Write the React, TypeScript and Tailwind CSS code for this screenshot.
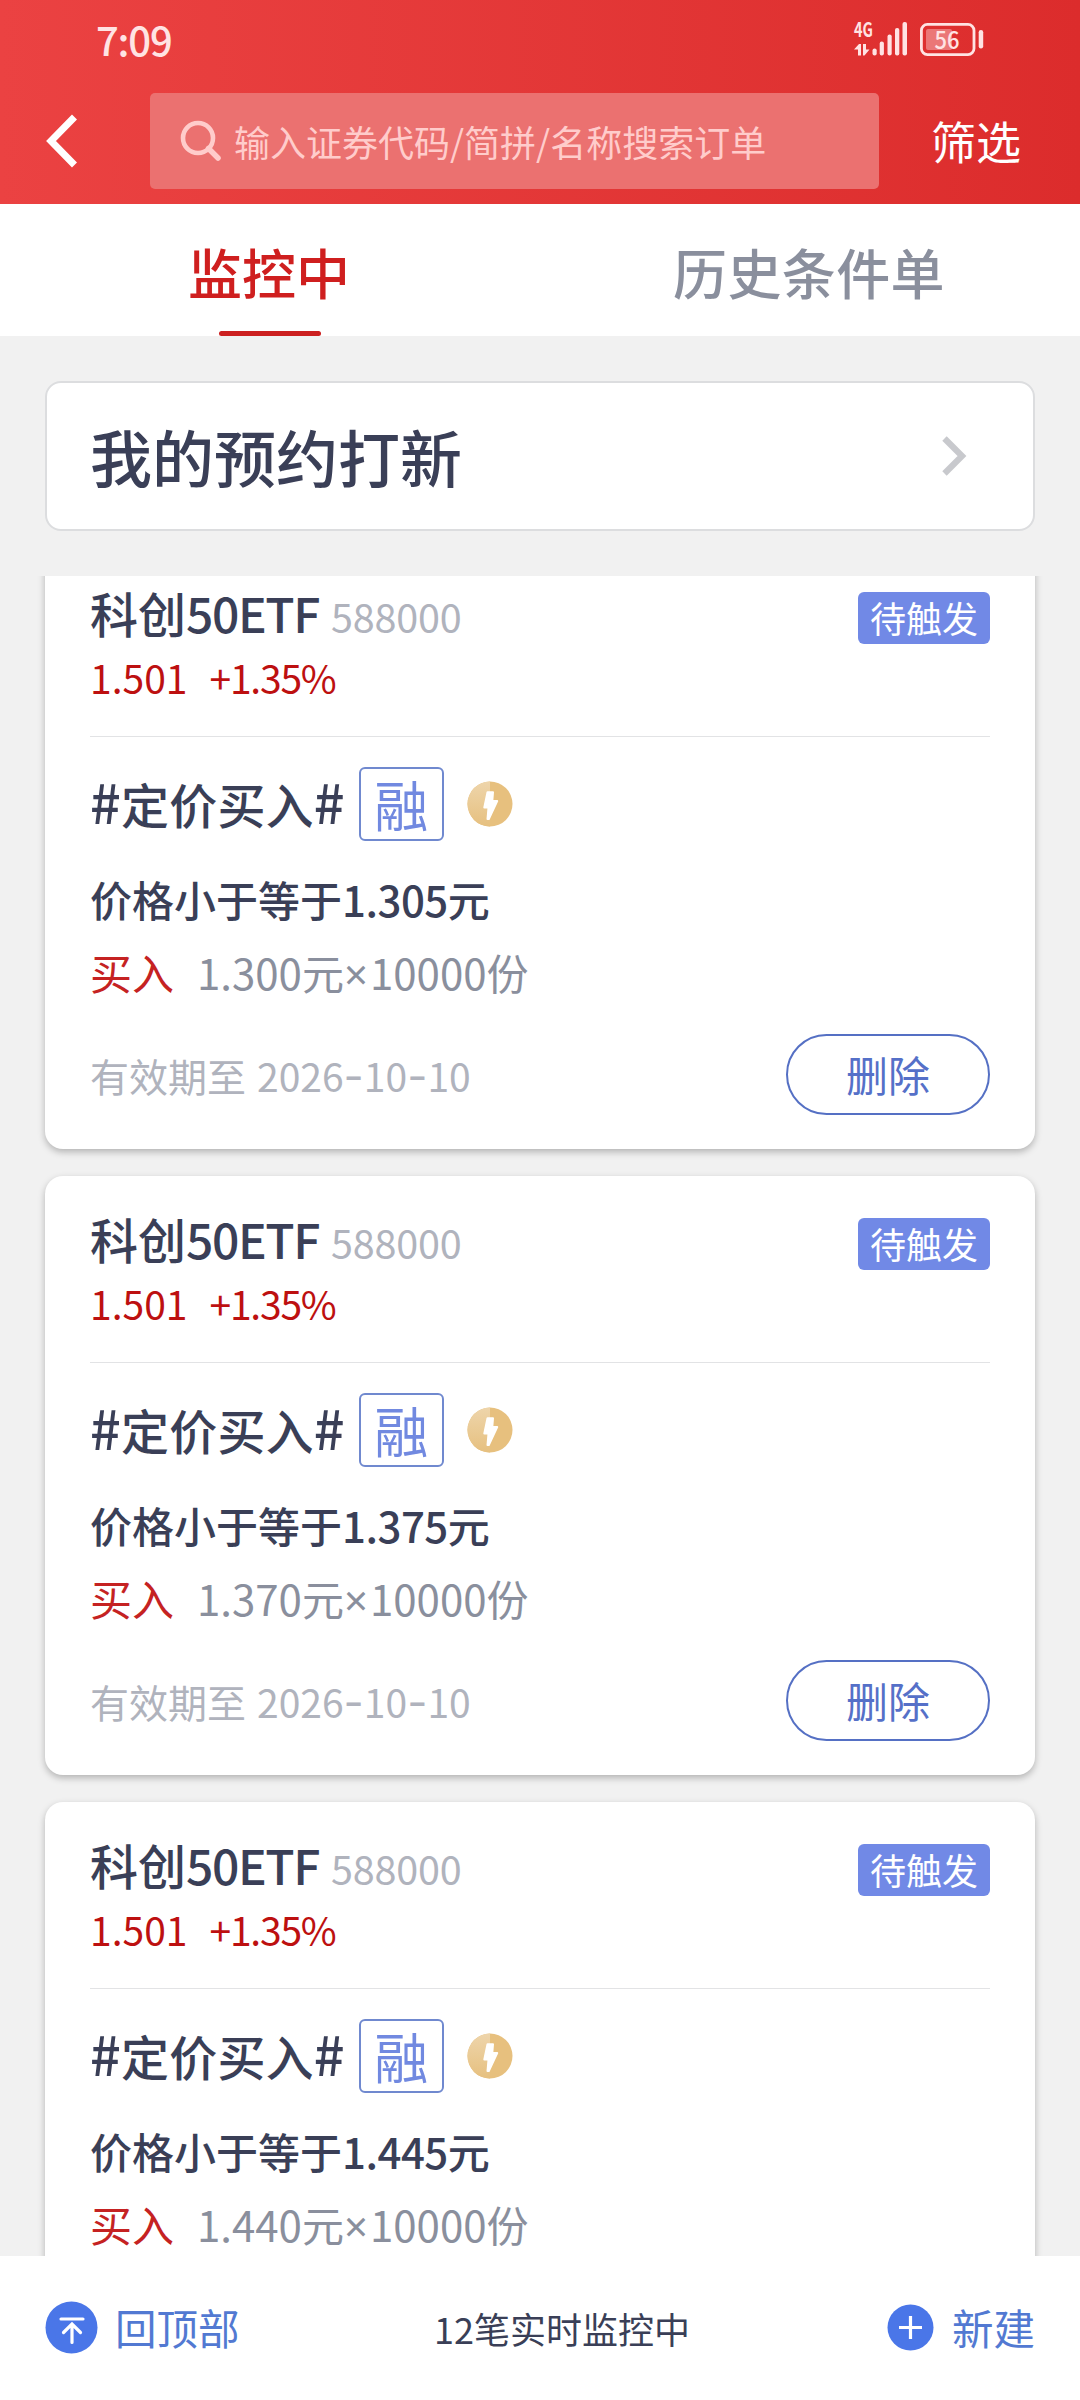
const orders = [
  { trigger: "1.305", price: "1.300", expires: "2026-10-10" },
  { trigger: "1.375", price: "1.370", expires: "2026-10-10" },
  { trigger: "1.445", price: "1.440", expires: "" },
];

function StatusIcons() {
  return (
    <svg className="h-[56px] w-[138px]" viewBox="-4 -10 138 56" fill="#ffe3e3">
      <text x="0" y="16" fontSize="20" fontWeight="700" textLength="19" lengthAdjust="spacingAndGlyphs">
        4G
      </text>
      <path d="M0 28.500 5 23H7V34.500H4V28.500ZM9 23h3v5.500h3.500L10.500 34.500H9Z" />
      <rect x="18.500" y="27.500" width="4.200" height="7" rx="2" />
      <rect x="25.700" y="20.500" width="4.200" height="14" rx="2" />
      <rect x="33.500" y="13.500" width="4.200" height="21" rx="2" />
      <rect x="41" y="7" width="4.300" height="27.500" rx="2" />
      <rect x="48.500" y="1" width="4.500" height="33.500" rx="2" />
      <rect x="67.400" y="3.400" width="52.600" height="30.200" rx="6" fill="none" stroke="#ffe3e3" strokeWidth="2.800" />
      <rect x="72" y="8" width="26" height="21" rx="2" opacity="0.4" />
      <rect x="124.700" y="9" width="4.500" height="18.500" rx="2.200" />
      <text x="80.500" y="27.500" fontSize="24" fontWeight="500" textLength="25" lengthAdjust="spacingAndGlyphs">
        56
      </text>
    </svg>
  );
}

function Header() {
  return (
    <header className="h-[204px] shrink-0 bg-linear-to-r from-[#eb4242] to-[#dc2c2c] text-white">
      <div className="flex h-[93px] items-start justify-between pr-[92px] pl-[96px]">
        <span className="mt-[15px] text-[40px] leading-[48px] font-medium tracking-[-1.2px] text-[#ffe3e3]">7:09</span>
        <div className="mt-[11px]">
          <StatusIcons />
        </div>
      </div>
      <div className="flex h-24 items-center">
        <div className="flex w-[150px] pl-[46px]">
          <svg className="h-[54px] w-8" viewBox="0 0 32 54" fill="none" stroke="#fff" strokeWidth="7">
            <path d="M28.500 3 5 27 28.500 51" />
          </svg>
        </div>
        <div className="flex h-24 w-[729px] items-center rounded-[5px] bg-[#eb7170] pl-[30px] text-[#ffcccb]">
          <svg className="h-[42px] w-[42px]" viewBox="0 0 42 42" fill="none" stroke="currentColor" strokeWidth="4.600">
            <circle cx="18" cy="18" r="15" />
            <path d="m28.500 28.500 9.500 9.500" strokeLinecap="round" strokeWidth="5.500" />
          </svg>
          <span className="ml-[12px] text-[36px] leading-[44px]">输入证券代码/简拼/名称搜索订单</span>
        </div>
        <span className="ml-[52px] text-[45px] leading-[54px]">筛选</span>
      </div>
    </header>
  );
}

function Tabs() {
  return (
    <nav className="grid h-[132px] shrink-0 grid-cols-2 bg-white text-[54px] leading-[66px] font-medium">
      <div className="flex flex-col items-center pt-[35px] text-[#cf1f1f]">
        <span className="pr-[2px]">监控中</span>
        <span className="mt-[26px] h-[5px] w-[102px] rounded-full bg-[#cc2020]" />
      </div>
      <div className="flex justify-center pt-[35px] pr-[2px] tracking-[0.4px] text-[#8a8f9d]">历史条件单</div>
    </nav>
  );
}

function BoltIcon() {
  return (
    <svg className="h-[46px] w-[46px]" viewBox="0 0 46 46">
      <defs>
        <linearGradient id="gold" x1="0" y1="0" x2="0" y2="1">
          <stop offset="0" stopColor="#eed5ab" />
          <stop offset="1" stopColor="#e6c07f" />
        </linearGradient>
      </defs>
      <circle cx="23" cy="23" r="22.500" fill="#e7c07e" />
      <path d="M23 .5a22.500 22.500 0 0 0 0 45Z" fill="url(#gold)" />
      <path
        d="M20.500 11.200H26L25.300 20h4.900L21.800 38h-1.300l1-11.500h-4.200Z"
        fill="#fff"
        stroke="#fff"
        strokeWidth="2"
        strokeLinejoin="round"
      />
    </svg>
  );
}

function OrderCard({ trigger, price, expires }: { trigger: string; price: string; expires: string }) {
  return (
    <article className="h-[599px] shrink-0 rounded-[18px] bg-white px-[45px] pt-[42px] text-[#3a3f57] shadow-[0_3px_7px_rgba(0,0,0,0.26)]">
      <div className="flex h-[52px] items-start justify-between">
        <div className="flex items-baseline leading-[40px]">
          <span className="text-[48px] font-medium">
            科创<span className="tracking-[-1.4px]">50ETF</span>
          </span>
          <span className="ml-[12px] text-[39.500px] tracking-[-0.2px] text-[#b0b3bd]">588000</span>
        </div>
        <span className="flex h-[52px] w-[132px] items-center justify-center rounded-[6px] bg-[#7189e6] pb-[3px] text-[36px] leading-[44px] text-white">
          待触发
        </span>
      </div>
      <div className="mt-[9px] flex gap-[22px] text-[39px] leading-[48px] text-[#bd1010]">
        <span>1.501</span>
        <span className="tracking-[-1.2px]">+1.35%</span>
      </div>
      <div className="mt-[35px] h-px bg-[#e2e3e5]" />
      <div className="mt-[30px] flex h-[74px] items-center">
        <span className="pb-[5px] text-[48px] leading-[56px] font-medium tracking-[0.2px]">
          <span className="text-[54px]">#</span>定价买入<span className="text-[54px]">#</span>
        </span>
        <span className="ml-[14px] flex h-[74px] w-[85px] items-center justify-center rounded-[6px] border-2 border-[#7089cf] text-[54px] leading-[60px] text-[#7189e0]">
          融
        </span>
        <span className="ml-[23px]">
          <BoltIcon />
        </span>
      </div>
      <p className="mt-[37px] text-[42px] leading-[42px] font-medium">
        价格小于等于<span className="tracking-[-0.5px]">{trigger}</span>元
      </p>
      <p className="mt-[31px] flex h-[42px] text-[42px] leading-[42px] text-[#8a8f9d]">
        <span className="text-[#c52222]">买入</span>
        <span className="ml-[23px]">
          {price}元<span className="mr-[2px] font-['Noto_Sans']">×</span>10000份
        </span>
      </p>
      {expires && (
        <div className="mt-[41px] flex h-[81px] items-center justify-between">
          <p className="text-[39px] leading-[48px] text-[#b0b3bd]">
            <span>有效期至</span>
            <span className="ml-[11px]">
              {expires.split("-").map((part, i) => (
                <span key={i}>
                  {i > 0 && <span className="font-[Inter] text-[44px] leading-[40px]">-</span>}
                  {part}
                </span>
              ))}
            </span>
          </p>
          <button className="h-[81px] w-[204px] rounded-full border-2 border-[#5570c4] pb-[2px] text-[42px] leading-[50px] text-[#5570c8]">
            删除
          </button>
        </div>
      )}
    </article>
  );
}

function Footer() {
  return (
    <footer className="flex h-[144px] shrink-0 items-center justify-between bg-white px-[45px] text-[41.500px] leading-[50px] text-[#5279d2]">
      <div className="flex w-[332px] items-center pb-[2px]">
        <svg className="h-[53px] w-[53px]" viewBox="0 0 53 53" fill="none" stroke="#fff" strokeWidth="3.200" strokeLinecap="round">
          <circle cx="26.500" cy="26.500" r="26" fill="#4a76e8" stroke="none" />
          <path d="M16 18h22M27 41.500V23.500M18.500 31.500l8.500-8.500 8.500 8.500" />
        </svg>
        <span className="ml-[17px]">回顶部</span>
      </div>
      <span className="text-center text-[36px] whitespace-nowrap text-[#3a3f57]">12笔实时监控中</span>
      <div className="flex w-[288px] items-center justify-end pb-[2px]">
        <svg className="h-[47px] w-[47px]" viewBox="0 0 47 47" fill="none" stroke="#fff" strokeWidth="3.200">
          <circle cx="23.500" cy="23.500" r="23" fill="#4a76e8" stroke="none" />
          <path d="M12 23.500h23M23.500 12v23" />
        </svg>
        <span className="ml-[18px]">新建</span>
      </div>
    </footer>
  );
}

export default function App() {
  return (
    <main
      lang="zh-CN"
      className="flex h-[2400px] w-[1080px] flex-col overflow-hidden bg-[#f1f1f1] font-['Noto_Sans_CJK_SC',sans-serif]"
    >
      <Header />
      <Tabs />
      <section className="mx-[45px] mt-[45px] flex h-[150px] shrink-0 items-center justify-between rounded-[16px] border-2 border-[#dcdddf] bg-white pr-[65px] pl-[43px] text-[#3a3f57]">
        <h1 className="text-[62px] leading-[76px] font-medium">我的预约打新</h1>
        <svg className="h-10 w-7" viewBox="0 0 28 40" fill="none" stroke="#c8c9cd" strokeWidth="6.200">
          <path d="M4.500 2.500 22 20 4.500 37.500" />
        </svg>
      </section>
      <section className="mt-[45px] min-h-0 flex-1 overflow-hidden px-[45px]">
        <div className="-mt-[26px] flex flex-col gap-[27px]">
          {orders.map((order) => (
            <OrderCard key={order.trigger} {...order} />
          ))}
        </div>
      </section>
      <Footer />
    </main>
  );
}
